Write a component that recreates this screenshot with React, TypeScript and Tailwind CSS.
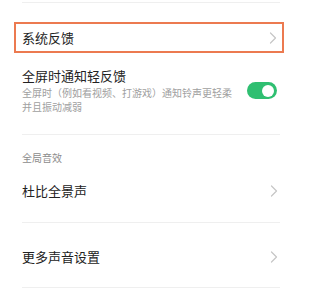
const Chevron = () => (
  <svg width="8" height="12" viewBox="0 0 8 12" fill="none" className="shrink-0">
    <path d="M1.5 1L6.5 6L1.5 11" stroke="#c6c6c6" strokeWidth="1.2" strokeLinecap="round" strokeLinejoin="round" />
  </svg>
);

const Divider = () => <div className="ml-[22px] mr-[22px] h-px bg-[#efefef]" />;

export default function App() {
  return (
    <div
      className="w-[302px] h-[300px] bg-white overflow-hidden pt-[2px]"
      style={{ fontFamily: '"Noto Sans CJK SC", "Noto Sans", sans-serif' }}
    >
      <Divider />

      {/* 系统反馈 (highlighted) */}
      <div className="mt-[19px] ml-[14px] mr-[18px] h-[31px] border-2 border-[#ec7a50] flex items-center justify-between pl-[6px] pr-[5px]">
        <span className="text-[13px] leading-[18px] text-[#222]">系统反馈</span>
        <Chevron />
      </div>

      {/* 全屏时通知轻反馈 */}
      <div className="mt-[14px] ml-[22px] mr-[25px] flex items-center justify-between">
        <div>
          <p className="text-[13px] leading-[18px] text-[#222]">全屏时通知轻反馈</p>
          <p className="mt-[1px] w-[214px] text-[10px] leading-[14px] text-[#a0a0a0]">
            全屏时（例如看视频、打游戏）通知铃声更轻柔并且振动减弱
          </p>
        </div>
        <div className="w-[30px] h-[17px] rounded-full bg-[#2fbf71] flex items-center justify-end pr-[3px]">
          <div className="w-[12px] h-[12px] rounded-full bg-white" />
        </div>
      </div>

      <div className="mt-[20px]">
        <Divider />
      </div>

      {/* 全局音效 */}
      <p className="mt-[16px] ml-[22px] text-[10px] leading-[14px] text-[#8c8c8c]">全局音效</p>

      <div className="mt-[17px] ml-[22px] mr-[24px] flex items-center justify-between">
        <span className="text-[13px] leading-[18px] text-[#222]">杜比全景声</span>
        <Chevron />
      </div>

      <div className="mt-[22px]">
        <Divider />
      </div>

      <div className="mt-[25px] ml-[22px] mr-[24px] flex items-center justify-between">
        <span className="text-[13px] leading-[18px] text-[#222]">更多声音设置</span>
        <Chevron />
      </div>

      <div className="mt-[21px]">
        <Divider />
      </div>
    </div>
  );
}
